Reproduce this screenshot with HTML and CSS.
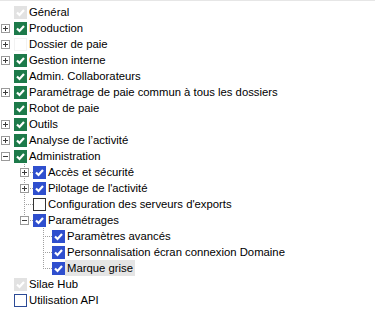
FILE: index.html
```html
<!DOCTYPE html>
<html lang="fr">
<head>
  <meta charset="UTF-8">
  <title>Droits</title>
  <link rel="stylesheet" href="styles.css">
</head>
<body>
  <div class="tree">
    <div class="row"><span class="slot"></span><span class="box dis"><svg viewBox="0 0 13 13"><path d="M3 6.5l2.5 2.5 4.5-5"/></svg></span><span class="label">Général</span></div>
    <div class="row"><span class="slot"><svg class="exp" viewBox="0 0 9 9"><rect x="0.5" y="0.5" width="8" height="8"/><path d="M2 4.5h5M4.5 2v5"/></svg></span><span class="box green"><svg viewBox="0 0 13 13"><path d="M3 6.5l2.5 2.5 4.5-5"/></svg></span><span class="label">Production</span></div>
    <div class="row"><span class="slot"><svg class="exp" viewBox="0 0 9 9"><rect x="0.5" y="0.5" width="8" height="8"/><path d="M2 4.5h5M4.5 2v5"/></svg></span><span class="box blank"></span><span class="label">Dossier de paie</span></div>
    <div class="row"><span class="slot"><svg class="exp" viewBox="0 0 9 9"><rect x="0.5" y="0.5" width="8" height="8"/><path d="M2 4.5h5M4.5 2v5"/></svg></span><span class="box green"><svg viewBox="0 0 13 13"><path d="M3 6.5l2.5 2.5 4.5-5"/></svg></span><span class="label">Gestion interne</span></div>
    <div class="row"><span class="slot"></span><span class="box green"><svg viewBox="0 0 13 13"><path d="M3 6.5l2.5 2.5 4.5-5"/></svg></span><span class="label">Admin. Collaborateurs</span></div>
    <div class="row"><span class="slot"><svg class="exp" viewBox="0 0 9 9"><rect x="0.5" y="0.5" width="8" height="8"/><path d="M2 4.5h5M4.5 2v5"/></svg></span><span class="box green"><svg viewBox="0 0 13 13"><path d="M3 6.5l2.5 2.5 4.5-5"/></svg></span><span class="label">Paramétrage de paie commun à tous les dossiers</span></div>
    <div class="row"><span class="slot"></span><span class="box green"><svg viewBox="0 0 13 13"><path d="M3 6.5l2.5 2.5 4.5-5"/></svg></span><span class="label">Robot de paie</span></div>
    <div class="row"><span class="slot"><svg class="exp" viewBox="0 0 9 9"><rect x="0.5" y="0.5" width="8" height="8"/><path d="M2 4.5h5M4.5 2v5"/></svg></span><span class="box green"><svg viewBox="0 0 13 13"><path d="M3 6.5l2.5 2.5 4.5-5"/></svg></span><span class="label">Outils</span></div>
    <div class="row"><span class="slot"><svg class="exp" viewBox="0 0 9 9"><rect x="0.5" y="0.5" width="8" height="8"/><path d="M2 4.5h5M4.5 2v5"/></svg></span><span class="box green"><svg viewBox="0 0 13 13"><path d="M3 6.5l2.5 2.5 4.5-5"/></svg></span><span class="label">Analyse de l’activité</span></div>
    <div class="row"><span class="slot"><svg class="exp" viewBox="0 0 9 9"><rect x="0.5" y="0.5" width="8" height="8"/><path d="M2 4.5h5"/></svg></span><span class="box green"><svg viewBox="0 0 13 13"><path d="M3 6.5l2.5 2.5 4.5-5"/></svg></span><span class="label">Administration</span></div>

    <div class="row lvl1"><span class="slot guide"><svg class="exp" viewBox="0 0 9 9"><rect x="0.5" y="0.5" width="8" height="8"/><path d="M2 4.5h5M4.5 2v5"/></svg></span><span class="box blue"><svg viewBox="0 0 13 13"><path d="M3 6.5l2.5 2.5 4.5-5"/></svg></span><span class="label">Accès et sécurité</span></div>
    <div class="row lvl1"><span class="slot guide"><svg class="exp" viewBox="0 0 9 9"><rect x="0.5" y="0.5" width="8" height="8"/><path d="M2 4.5h5M4.5 2v5"/></svg></span><span class="box blue"><svg viewBox="0 0 13 13"><path d="M3 6.5l2.5 2.5 4.5-5"/></svg></span><span class="label">Pilotage de l'activité</span></div>
    <div class="row lvl1"><span class="slot guide"></span><span class="box empty"></span><span class="label">Configuration des serveurs d'exports</span></div>
    <div class="row lvl1"><span class="slot guide last"><svg class="exp" viewBox="0 0 9 9"><rect x="0.5" y="0.5" width="8" height="8"/><path d="M2 4.5h5"/></svg></span><span class="box blue"><svg viewBox="0 0 13 13"><path d="M3 6.5l2.5 2.5 4.5-5"/></svg></span><span class="label">Paramétrages</span></div>

    <div class="row lvl2"><span class="slot guide"></span><span class="box blue"><svg viewBox="0 0 13 13"><path d="M3 6.5l2.5 2.5 4.5-5"/></svg></span><span class="label">Paramètres avancés</span></div>
    <div class="row lvl2"><span class="slot guide"></span><span class="box blue"><svg viewBox="0 0 13 13"><path d="M3 6.5l2.5 2.5 4.5-5"/></svg></span><span class="label">Personnalisation écran connexion Domaine</span></div>
    <div class="row lvl2"><span class="slot guide last"></span><span class="box blue"><svg viewBox="0 0 13 13"><path d="M3 6.5l2.5 2.5 4.5-5"/></svg></span><span class="label selected">Marque grise</span></div>

    <div class="row"><span class="slot"></span><span class="box dis"><svg viewBox="0 0 13 13"><path d="M3 6.5l2.5 2.5 4.5-5"/></svg></span><span class="label">Silae Hub</span></div>
    <div class="row"><span class="slot"></span><span class="box empty api"></span><span class="label">Utilisation API</span></div>
  </div>
</body>
</html>
```

FILE: styles.css
```css
body {
  margin: 0;
  background-color: #ffffff;
  font-family: "Liberation Sans", Arial, sans-serif;
  font-size: 11.3px;
  color: #000000;
}

.tree {
  border-top: 1px solid #e6e6e6;
  padding-top: 3px;
}

.row {
  display: flex;
  align-items: center;
  height: 16px;
}

.lvl1 {
  padding-left: 19px;
}

.lvl2 {
  padding-left: 38px;
}

/* expander column */
.slot {
  width: 14px;
  height: 16px;
  flex-shrink: 0;
  display: flex;
  align-items: center;
}

/* dotted tree lines */
.guide {
  background:
    repeating-linear-gradient(to bottom, #a0a0a0 0 1px, transparent 1px 2px) 5px 0 / 1px 16px no-repeat,
    repeating-linear-gradient(to right, #a0a0a0 0 1px, transparent 1px 2px) 5px 8px / 9px 1px no-repeat;
}

.guide.last {
  background:
    repeating-linear-gradient(to bottom, #a0a0a0 0 1px, transparent 1px 2px) 5px 0 / 1px 9px no-repeat,
    repeating-linear-gradient(to right, #a0a0a0 0 1px, transparent 1px 2px) 5px 8px / 9px 1px no-repeat;
}

.exp {
  width: 9px;
  height: 9px;
  margin-left: 1px;
  margin-top: 1px;
}

.exp rect {
  fill: #ffffff;
  stroke: #9a9a9a;
  stroke-width: 1;
}

.exp path {
  stroke: #3c3c3c;
  stroke-width: 1;
}

/* checkboxes */
.box {
  width: 13px;
  height: 13px;
  box-sizing: border-box;
  flex-shrink: 0;
  display: flex;
}

.box svg {
  width: 13px;
  height: 13px;
}

.box path {
  fill: none;
  stroke: #ffffff;
  stroke-width: 2.2;
}

.green {
  background-color: #1d7a4a;
}

.blue {
  background-color: #2f4fce;
}

.dis {
  background-color: #e2e2e2;
}

.blank {
  background-color: #ffffff;
  border: 1px solid #f2f2f2;
}

.empty {
  border: 1px solid #333333;
  background-color: #ffffff;
}

.empty.api {
  border-color: #2b4a96;
}

.label {
  padding: 0 2px 0 2px;
  white-space: nowrap;
  line-height: 16px;
}

.selected {
  background-color: #e5e5e5;
}
```
